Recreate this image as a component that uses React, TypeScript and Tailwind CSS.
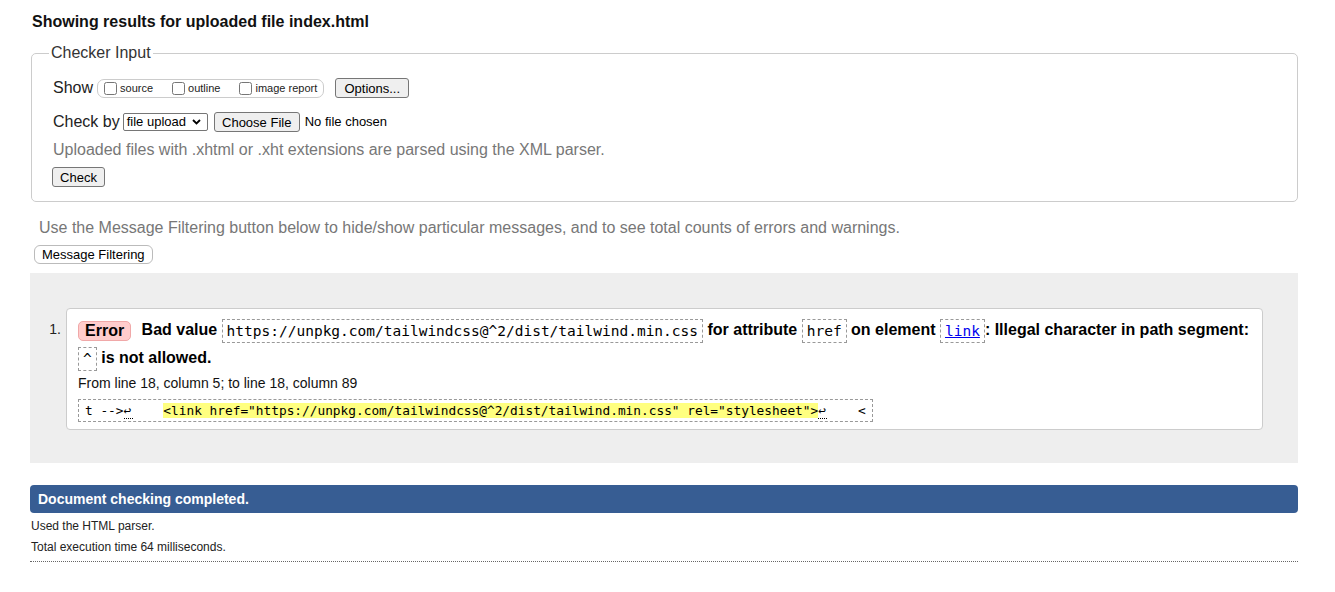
import React from 'react';

const sans = { fontFamily: '"Liberation Sans", Arial, sans-serif' };
const mono = { fontFamily: '"DejaVu Sans Mono", "Liberation Mono", monospace' };

const Btn: React.FC<{ children: React.ReactNode; className?: string }> = ({ children, className = '' }) => (
  <span
    className={`inline-flex items-center justify-center h-[20px] px-[6px] text-[13px] leading-none text-black bg-[#efefef] border border-[#767676] rounded-[3px] ${className}`}
  >
    {children}
  </span>
);

const Code: React.FC<{ children: React.ReactNode; className?: string }> = ({ children, className = '' }) => (
  <code
    className={`inline-block align-middle border border-dashed border-[#999] px-[4px] leading-[22px] text-[14.5px] font-normal ${className}`}
    style={mono}
  >
    {children}
  </code>
);

const Lf = () => (
  <span className="inline-block w-[9px] leading-[14px] border-b border-dotted border-black">↩</span>
);

export default function App() {
  return (
    <div className="w-[1335px] min-h-[592px] bg-white text-black" style={sans}>
      <div className="ml-[30px] w-[1268px]">
        <h2 className="pt-[13px] pl-[2px] text-[16px] leading-[18px] font-bold text-[#111]">
          Showing results for uploaded file index.html
        </h2>

        {/* Checker input */}
        <fieldset className="mt-[13px] ml-[1px] border border-[#ccc] rounded-[5px] pl-[21px] pr-4 pb-[14px]">
          <legend className="-ml-[4px] px-[2px] text-[16px] leading-[18px] text-[#333]">Checker Input</legend>

          <div className="mt-[16px] h-[20px] flex items-center">
            <span className="text-[16px] text-[#222]">Show</span>
            <span className="ml-[4px] h-[19px] flex items-center border border-[#ccc] rounded-[7px] pl-[6px] pr-[6px] text-[11px] text-[#222]">
              <input type="checkbox" className="w-[13px] h-[13px] m-0" />
              <span className="ml-[3px]">source</span>
              <input type="checkbox" className="w-[13px] h-[13px] m-0 ml-[19px]" />
              <span className="ml-[3px]">outline</span>
              <input type="checkbox" className="w-[13px] h-[13px] m-0 ml-[19px]" />
              <span className="ml-[3px]">image report</span>
            </span>
            <Btn className="ml-[11px] w-[74px]">Options...</Btn>
          </div>

          <div className="mt-[14px] h-[20px] flex items-center">
            <span className="text-[16px] text-[#222]">Check by</span>
            <span className="ml-[3px] h-[18px] w-[85px] flex items-center justify-between border border-[#767676] rounded-[2px] pl-[3px] pr-[6px] text-[13px]">
              file upload
              <svg width="9" height="6" viewBox="0 0 9 6" fill="none" stroke="#000" strokeWidth="1.8">
                <path d="M1 1l3.5 3.5L8 1" />
              </svg>
            </span>
            <Btn className="ml-[6px] w-[86px]">Choose File</Btn>
            <span className="ml-[5px] text-[13px]">No file chosen</span>
          </div>

          <p className="mt-[9px] text-[16px] leading-[18px] text-[#777]">
            Uploaded files with .xhtml or .xht extensions are parsed using the XML parser.
          </p>

          <div className="mt-[8px] -ml-[1px] flex">
            <Btn className="w-[53px]">Check</Btn>
          </div>
        </fieldset>

        <p className="mt-[17px] ml-[9px] text-[16px] leading-[18px] text-[#777]">
          Use the Message Filtering button below to hide/show particular messages, and to see total counts of errors and warnings.
        </p>
        <div className="mt-[8px] ml-[4px] flex">
          <span className="inline-flex items-center h-[19px] px-[7px] text-[13px] bg-white border border-[#bbb] rounded-[6px]">
            Message Filtering
          </span>
        </div>

        {/* Results */}
        <div className="mt-[9px] bg-[#eeeeee] pt-[35px] pb-[33px]">
          <ol className="flex">
            <span className="w-[36px] pr-[5px] mt-[7px] text-right text-[14px] leading-[28px] text-[#222]">1.</span>
            <li className="flex-1 mr-[35px] bg-white border border-[#ccc] rounded-[4px] pl-[11px] pr-3 pt-[7px] pb-[7px]">
              <p className="text-[16px] leading-[28px] font-bold">
                <span className="inline-block align-middle h-[20px] leading-[18px] px-[6px] mr-[6px] bg-[#ffcccc] border border-[#f0a8a8] rounded-[5px]">
                  Error
                </span>{' '}
                Bad value <Code>https://unpkg.com/tailwindcss@^2/dist/tailwind.min.css</Code> for attribute{' '}
                <Code>href</Code> on element{' '}
                <Code>
                  <a href="#" className="text-[#0000ee] underline">link</a>
                </Code>
                : Illegal character in path segment: <Code>^</Code> is not allowed.
              </p>
              <p className="mt-[1px] text-[14px] leading-[20px] text-[#111]">
                From line 18, column 5; to line 18, column 89
              </p>
              <div className="mt-[5px]">
                <code
                  className="inline-block h-[23px] leading-[21px] border border-dashed border-[#999] pl-[6px] pr-[6px] text-[12.8px] whitespace-pre"
                  style={mono}
                >
                  {'t -->'}<Lf />{'    '}<span className="bg-[#ffff80]">{'<link href="https://unpkg.com/tailwindcss@^2/dist/tailwind.min.css" rel="stylesheet">'}</span><Lf />{'    <'}
                </code>
              </div>
            </li>
          </ol>
        </div>

        {/* Summary */}
        <div className="mt-[22px] h-[28px] flex items-center px-[8px] bg-[#375d93] rounded-[4px] text-white text-[14px] font-bold">
          Document checking completed.
        </div>
        <p className="mt-[5px] ml-[1px] text-[12px] leading-[16px] text-[#222]">Used the HTML parser.</p>
        <p className="mt-[5px] ml-[1px] text-[12px] leading-[16px] text-[#222]">Total execution time 64 milliseconds.</p>
        <div className="mt-[6px] border-b border-dotted border-[#666]" />
      </div>
    </div>
  );
}
